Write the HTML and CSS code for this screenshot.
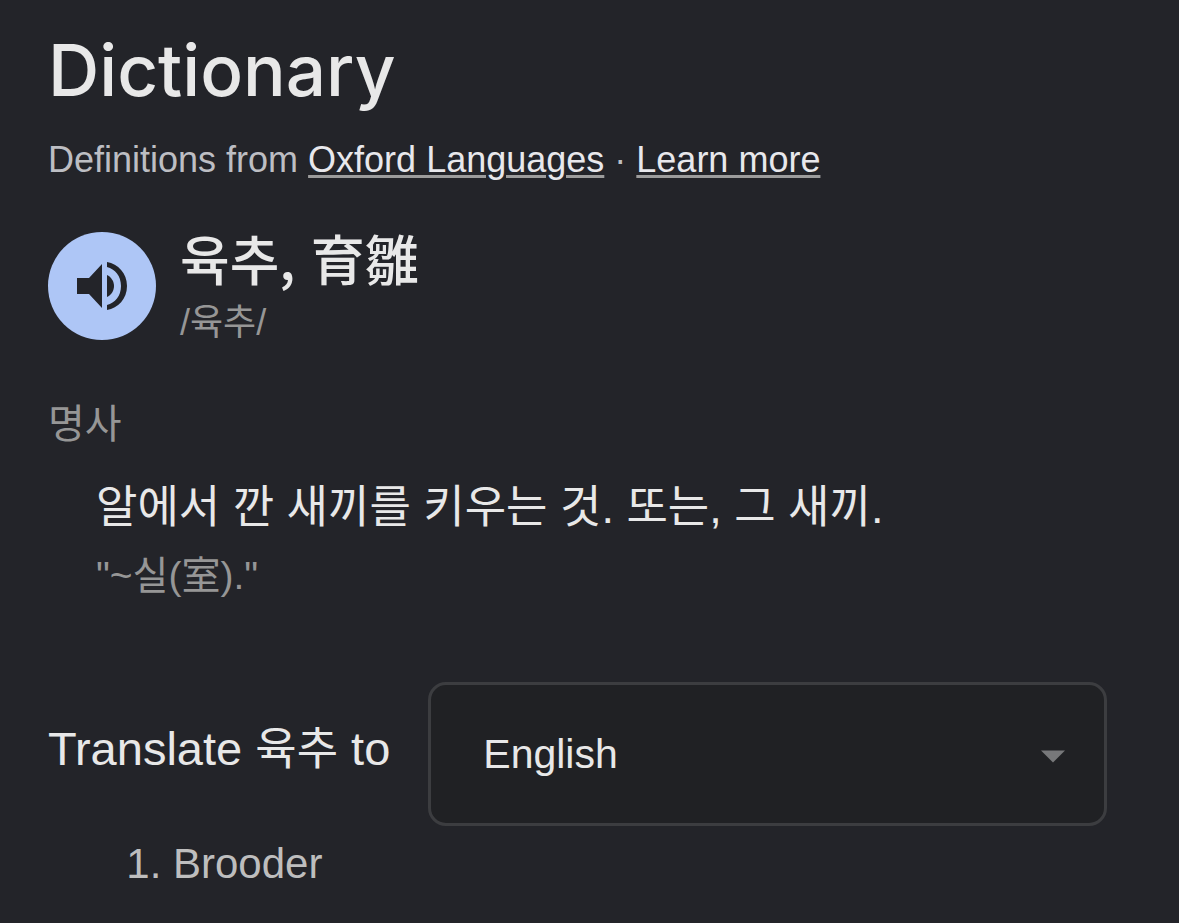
FILE: index.html
```html
<!DOCTYPE html>
<html lang="en">
<head>
    <meta charset="UTF-8">
    <meta name="viewport" content="width=device-width, initial-scale=1.0">
    <title>Dictionary</title>
    <link rel="stylesheet" href="styles.css">
</head>
<body>
    <main class="dictionary">
        <h1 class="title">Dictionary</h1>
        <p class="source">Definitions from <a href="#oxford">Oxford Languages</a> · <a href="#more">Learn more</a></p>

        <section class="entry">
            <button class="speak" type="button" aria-label="Listen">
                <svg class="speak-icon" viewBox="0 0 50 50" aria-hidden="true">
                    <path d="M0 17v16h12l13 14V3L12 17z"/>
                    <path d="M30 14v22c4-2 7-6 7-11s-3-9-7-11z"/>
                    <path d="M30 1v5c8 2 14 9 14 19s-6 17-14 19v5c11-2 20-11 20-24S41 3 30 1z"/>
                </svg>
            </button>
            <div lang="ko">
                <h2 class="word">육추, 育雛</h2>
                <div class="phonetic">/육추/</div>
            </div>
        </section>

        <div class="part" lang="ko">명사</div>
        <div class="meaning" lang="ko">
            <p class="definition">알에서 깐 새끼를 키우는 것. 또는, 그 새끼.</p>
            <p class="example">"~실(室)."</p>
        </div>

        <div class="translate">
            <label class="translate-label" for="language">Translate <span class="term" lang="ko">육추</span> to</label>
            <div class="select-box">
                <select class="language" id="language">
                    <option>English</option>
                </select>
                <svg class="arrow" viewBox="0 0 24 12" aria-hidden="true"><path d="M0 0h24L12 12z"/></svg>
            </div>
        </div>
        <ol class="results">
            <li>Brooder</li>
        </ol>
    </main>
</body>
</html>
```

FILE: styles.css
```css
* {
    box-sizing: border-box;
}
body {
    margin: 0;
    background: #232429;
    color: #e8e8e8;
    font-family: "Liberation Sans", "Noto Sans CJK KR", sans-serif;
}
h1, h2, p {
    margin: 0;
    font-weight: 400;
}
.dictionary {
    padding: 28px 72px 28px 48px;
}
.title {
    font-family: Inter, sans-serif;
    font-size: 71px;
    font-weight: 500;
    line-height: 84px;
}
.source {
    margin-top: 24px;
    color: #bdbec3;
    font-size: 36px;
    line-height: 48px;
}
.source a {
    color: #e8e8ec;
    text-decoration-color: #9c9c9c;
    text-decoration-thickness: 3px;
    text-underline-offset: 3px;
}
.entry {
    display: flex;
    align-items: center;
    gap: 24px;
    margin-top: 41px;
}
.speak {
    display: flex;
    align-items: center;
    justify-content: center;
    width: 108px;
    height: 108px;
    padding: 0;
    border: 0;
    border-radius: 50%;
    background: #aec6f6;
}
.speak-icon {
    width: 50px;
    height: 50px;
    fill: #232429;
}
.word {
    margin-bottom: 8px;
    font-family: "Noto Sans CJK KR", sans-serif;
    font-size: 54px;
    font-weight: 500;
    line-height: 66px;
}
.phonetic {
    color: #969696;
    font-size: 36px;
    line-height: 48px;
}
.part {
    margin-top: 49px;
    color: #969696;
    font-size: 40px;
    line-height: 56px;
}
.meaning {
    padding: 24px 0 0 48px;
}
.definition {
    font-size: 45px;
    line-height: 64px;
}
.example {
    margin-top: 4px;
    color: #969696;
    font-size: 39px;
    line-height: 64px;
}
.translate {
    display: flex;
    align-items: center;
    gap: 38px;
    margin-top: 74px;
}
.translate-label {
    padding-bottom: 10px;
    font-size: 47px;
    line-height: 56px;
}
.term {
    font-size: 45px;
}
.select-box {
    position: relative;
    flex: 1;
}
.language {
    display: block;
    width: 100%;
    height: 144px;
    padding: 0 52px;
    border: 3px solid #3c3d40;
    border-radius: 18px;
    background: #202124;
    color: #e8e8e8;
    font: inherit;
    font-size: 41px;
    appearance: none;
}
.arrow {
    position: absolute;
    top: 68px;
    right: 42px;
    width: 24px;
    height: 13px;
    fill: #77787a;
    pointer-events: none;
}
.results {
    margin: 12px 0 0;
    padding-left: 125px;
    color: #bebebe;
    font-size: 42px;
    line-height: 52px;
}
```
